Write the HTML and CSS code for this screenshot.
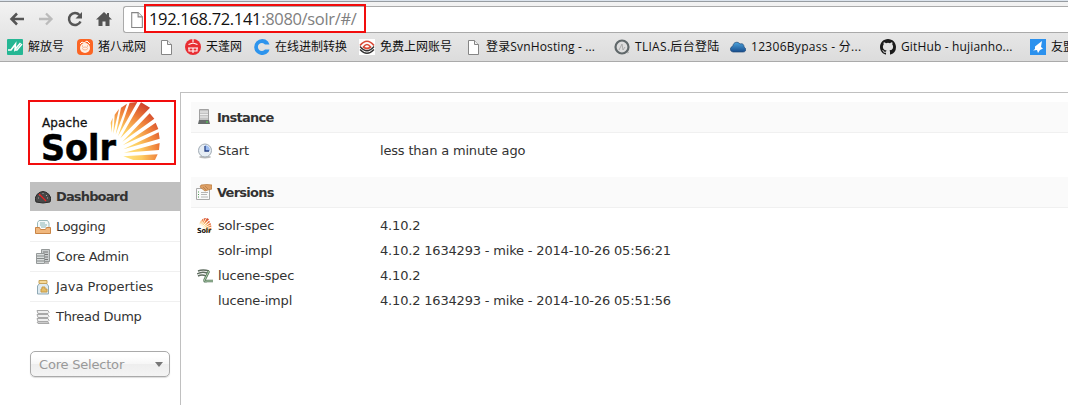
FILE: index.html
```html
<!DOCTYPE html>
<html lang="en">
<head>
<meta charset="utf-8">
<title>Solr Admin</title>
<link rel="stylesheet" href="styles.css">
</head>
<body>
<svg width="0" height="0" class="defs">
  <defs>
    <radialGradient id="sun" gradientUnits="userSpaceOnUse" cx="15" cy="172" r="205">
      <stop offset=".2" stop-color="#ffe680"/><stop offset=".45" stop-color="#fdcb60"/><stop offset=".7" stop-color="#ee7e3a"/><stop offset="1" stop-color="#c22a26"/>
    </radialGradient>
    <linearGradient id="cloud" x2="0" y2="1"><stop stop-color="#4ba3dd"/><stop offset="1" stop-color="#174c8c"/></linearGradient>
    <symbol id="page" viewBox="0 0 16 16"><path d="M3.500 1.500h6l4 4v10h-10z" fill="#fff" stroke="#858585"/><path d="M9.500 1.500v4h4" fill="#eee" stroke="#858585"/></symbol>
    <symbol id="burst" viewBox="0 6 174 177"><path fill="url(#sun)" d="M17 98L14 68L20 53ZM22 101L26 44L39 27ZM29 104L45 23L63 11ZM36 109L71 8L94 6ZM43 115L105 7L132 23ZM49 125L131 40L145 56ZM50 136L149 68L157 87ZM52 148L158 97L161 116ZM54 158L161 129L159 150ZM52 169L155 163L147 180H82Z"/></symbol>
  </defs>
</svg>

<header class="browser">
  <div class="tabs"></div>
  <div class="toolbar">
    <svg class="nav" width="16" height="16"><path d="M15 8H3M8 2.500L2.500 8L8 13.500" fill="none" stroke="#555" stroke-width="2.500"/></svg>
    <svg class="nav" width="16" height="16"><path d="M1 8H13M8 2.500L13.500 8L8 13.500" fill="none" stroke="#bbb" stroke-width="2.300"/></svg>
    <svg class="nav" width="16" height="16"><path d="M13.500 10.500A6 6 0 1 1 12.500 4" fill="none" stroke="#555" stroke-width="2.500"/><path d="M15 1v6.500H8.500z" fill="#555"/></svg>
    <svg class="nav" width="16" height="16"><path d="M8 1L0 8.500h2.500V15h4v-4.500h3V15h4V8.500H16L13 5.700V2h-2v1.800z" fill="#555"/></svg>
    <div class="omnibox">
      <svg class="doc" width="17" height="17"><use href="#page"/></svg>
      <div class="url"><b>192.168.72.141</b>:8080/solr/#/</div>
    </div>
  </div>
  <nav class="bookmarks">
    <a class="b1"><svg width="16" height="16"><rect width="16" height="16" rx="1" fill="#25b794"/><path d="M1 11H4L8.500 5L8 10.500L13.500 4" fill="none" stroke="#fff" stroke-width="1.600"/><path d="M8 11H10L15 5" fill="none" stroke="#fff" stroke-width="1.400"/></svg>解放号</a>
    <a class="b2"><svg width="16" height="16"><rect width="16" height="16" rx="4" fill="#fb6524"/><circle cx="8" cy="9" r="5" fill="#fff0e4"/><path d="M3 5L5 3L7 4L10 2L13 5" stroke="#fff" fill="none"/><ellipse cx="8" cy="9.500" rx="2.500" ry="1.500" fill="none" stroke="#fab18d"/><path d="M5 7h1M10 7h1" stroke="#e58860"/></svg>猪八戒网</a>
    <a class="b3"><svg width="16" height="16"><use href="#page"/></svg></a>
    <a class="b4"><svg width="16" height="16"><circle cx="8" cy="8" r="8" fill="#e82d32"/><path d="M8 0v3M3.500 5.500L8 4l4.500 1.500M3 9h10M4 9v3h8V9M8 9v5" fill="none" stroke="#fff" stroke-width="1.100"/></svg>天蓬网</a>
    <a class="b5"><svg width="16" height="16"><path d="M14 2.500A8 8 0 1 0 14.500 13L15.500 10.500H11A4 4 0 1 1 11 5.500H15.500Z" fill="#2d94ed"/></svg>在线进制转换</a>
    <a class="b6"><svg width="16" height="16"><rect width="16" height="16" fill="#fff"/><path d="M1 6.500Q8-2 15 6.500M4.500 8Q8 3 11.500 8Q8 11 4.500 8Z" fill="none" stroke="#d94b38" stroke-width="1.700"/><path d="M1 7.500Q8 16 15 7.500M1 10.500Q8 18 15 10.500" fill="none" stroke="#333" stroke-width="1.300"/></svg>免费上网账号</a>
    <a class="b7"><svg width="16" height="16"><use href="#page"/></svg><span>登录SvnHosting - ...</span></a>
    <a class="b8"><svg width="16" height="16"><circle cx="8" cy="8" r="6.500" fill="#ddd" stroke="#60686a" stroke-width="2.200"/><path d="M5 11L8 5L9 11L11 8M13 14L15 13" fill="none" stroke="#aaa"/></svg><span>TLIAS.后台登陆</span></a>
    <a class="b9"><svg width="16" height="16"><path d="M3 13C-1 12 0 8 3 7C3 3 8 2 10 5C13 4 14 6 14 8C17 10 16 13 13 13Z" fill="url(#cloud)" stroke="#234b78" stroke-width=".7"/></svg><span>12306Bypass - 分...</span></a>
    <a class="b10"><svg width="16" height="16"><path fill="#1b1b1b" d="M8 0C3.580 0 0 3.580 0 8c0 3.540 2.290 6.530 5.470 7.590.4.070.55-.17.55-.38v-1.490C3.800 14.200 3.330 12.780 3.330 12.780c-.36-.92-.89-1.170-.89-1.170-.73-.5.050-.49.050-.49.800.060 1.230.830 1.230.830.710 1.220 1.870.870 2.330.660.070-.52.280-.87.500-1.070C4.780 11.340 2.900 10.650 2.900 7.580c0-.87.310-1.590.820-2.150-.08-.2-.36-1.020.080-2.120 0 0 .67-.21 2.200.82a7.600 7.600 0 014 0c1.530-1.040 2.200-.82 2.200-.82.440 1.100.160 1.920.080 2.120.51.560.820 1.270.820 2.150 0 3.070-1.870 3.750-3.650 3.950.290.250.540.730.540 1.480v2.200c0 .21.150.46.550.38A8 8 0 0016 8c0-4.420-3.580-8-8-8z"/></svg><span>GitHub - hujianho...</span></a>
    <a class="b11"><svg width="16" height="16"><rect width="16" height="16" fill="#2b91ee"/><path d="M12 2L5 7.500V10L3 11.500L7 11L8 14L10 11L13 9.500L11 8Z" fill="#fff"/></svg>友盟</a>
  </nav>
</header>

<div class="app">
  <aside class="side">
    <div class="logo">
      <svg width="144" height="61" viewBox="30 102 144 61">
        <use href="#burst" x="106" y="102" width="58" height="59"/>
        <text x="42" y="127" class="apache" textLength="45.500">Apache</text>
        <text x="41" y="159.500" class="solr" textLength="75" lengthAdjust="spacingAndGlyphs">Solr</text>
      </svg>
    </div>
    <ul class="menu">
      <li class="active"><svg width="16" height="16"><path d="M1 13Q-1 9 2 5.500Q8-.5 14 5.500Q17 9 15 13Q8 15 1 13Z" fill="#484848" stroke="#2c2c2c"/><path d="M3 9h1M4.500 6l1 1M8 4v1M12 6l-1 1M12 9h1" stroke="#aaa"/><path d="M4 5L11 12" stroke="#e22" stroke-width="1.300"/></svg><span>Dashboard</span></li>
      <li><svg width="16" height="16"><path d="M2.500 8V3.500L4 1.500h8.500L14 4v5" fill="#f4fafa" stroke="#9bb9bb"/><path d="M5 4h5M5 6h7M6 8h5" stroke="#8bb4b5"/><path d="M.5 8.500h4l1 2h5l1-2h4v6H.5z" fill="#f0b77d" stroke="#c98546"/></svg><span>Logging</span></li>
      <li><svg width="16" height="16"><path d="M6.500.5h8v12h-8z" fill="#c9cdce" stroke="#959999"/><path d="M8 3h5M8 5.500h5M8 8h5M8 10.500h5" stroke="#777"/><path d="M1.500 4.500h8v10h-8z" fill="#d9dddd" stroke="#959999"/><path d="M2 7h7M2 9.500h7M2 12h7" stroke="#858989"/><path d="M10 14h4" stroke="#777"/></svg><span>Core Admin</span></li>
      <li><svg width="16" height="16"><path d="M4.500 4.500L2.500 7v8h11V7l-2-2.500z" fill="#dfebf1" stroke="#8fa9b5"/><path d="M4 1.500h8v3H4z" fill="#f5d99a" stroke="#c7a45b"/><path d="M6 13v-3h1V8h3v2h2v3z" fill="#e4bd68" stroke="#c99c46"/></svg><span class="wide">Java Properties</span></li>
      <li><svg width="16" height="16"><path d="M2 1.500h11l1 2-1 1H3zM2 5.500h11l1 2-1 1H3zM2 9.500h11l1 2-1 1H3zM2 13h11l1 1.500H3z" fill="#eee" stroke="#a8a8a8"/></svg><span>Thread Dump</span></li>
    </ul>
    <div class="selector"><span>Core Selector</span><i></i></div>
  </aside>
  <main class="content">
    <section>
      <h2><svg width="16" height="16"><path d="M3.500.5h9v12h-9z" fill="#c4c4c4" stroke="#a2a2a2"/><path d="M4 3h8M4 5.500h8M4 8h8" stroke="#eee"/><path d="M3 11h10l1 4H2z" fill="#686c6c"/><path d="M10 13h2" stroke="#4de04d"/></svg>Instance</h2>
      <dl>
        <dt><svg width="16" height="16"><ellipse cx="8" cy="14" rx="6" ry="1.500" fill="#bbb"/><circle cx="8" cy="7.500" r="6.500" fill="#e6edf4" stroke="#a2acb5"/><path d="M8 8V2A6 6 0 0113 8Z" fill="#9cbcf1"/><path d="M8 3v5h4" fill="none" stroke="#263f83" stroke-width="1.300"/></svg><span>Start</span></dt><dd>less than a minute ago</dd>
      </dl>
    </section>
    <section>
      <h2><svg width="16" height="16"><path d="M.5 4.500h13v11H.5z" fill="#fafafa" stroke="#aaa"/><path d="M2 8h1M2 10.500h1M2 13h1" stroke="#4d9951"/><path d="M5 8.500h7M5 10.500h6M5 13h7" stroke="#b6b6b6"/><path d="M5 1L11 .5L16 1V5L12 6L9 7L4 3Z" fill="#dea066" stroke="#b77839" stroke-width=".7"/><path d="M7 3l3 3M9 2l3 3" stroke="#b98453"/></svg>Versions</h2>
      <dl>
        <dt><svg width="16" height="16"><use href="#burst" x="1" y="0" width="15" height="14"/><text x="0" y="14.500" class="mini" textLength="14" lengthAdjust="spacingAndGlyphs">Solr</text></svg><span>solr-spec</span></dt><dd>4.10.2</dd>
        <dt><svg width="16" height="16"></svg><span>solr-impl</span></dt><dd>4.10.2 1634293 - mike - 2014-10-26 05:56:21</dd>
        <dt><svg width="16" height="16"><path d="M1 3Q6 1 12 3M0 6Q5 3 10 5M1 8Q5 6 9 8" fill="none" stroke="#5f6d60" stroke-width="1.400"/><path d="M12 3L8 11Q6 14 10 13L16 13" fill="none" stroke="#54745a" stroke-width="2.500"/><path d="M12 3L8 11Q6 14 10 13L16 13" fill="none" stroke="#b4d2b1"/></svg><span>lucene-spec</span></dt><dd>4.10.2</dd>
        <dt><svg width="16" height="16"></svg><span>lucene-impl</span></dt><dd>4.10.2 1634293 - mike - 2014-10-26 05:51:56</dd>
      </dl>
    </section>
  </main>
</div>
</body>
</html>
```
FILE: styles.css
```css
* { box-sizing: border-box; }
body { margin: 0; height: 405px; overflow: hidden; background: #fff; color: #333; font-family: "DejaVu Sans", Verdana, sans-serif; font-size: 13px; }
svg { display: block; flex: none; }
.defs { position: absolute; }

.browser { height: 62px; background: linear-gradient(#f3f3f3, #dcdcdc); border-bottom: 1px solid #aaa; }
.tabs { height: 2px; background: #dce4ed; border-bottom: 1px solid #979ca1; }
.toolbar { display: flex; height: 31px; padding: 4px 0 0 9px; }
.nav { margin: 5px 13px 0 0; }
.nav:nth-child(4) { margin-right: 11px; }
.omnibox { position: relative; display: flex; flex: 1; height: 27px; background: #fff; border: 1px solid #aaa; border-right: 0; border-radius: 3px 0 0 3px; }
.doc { margin: 4px 0 0 4px; }
.url { position: absolute; left: 20px; top: -3px; width: 222px; height: 29px; border: 2px solid #f20d0d; padding-left: 3px; font: 16.500px/26px "Open Sans", sans-serif; letter-spacing: -.33px; color: #808080; white-space: nowrap; }
.url b { font-weight: 400; color: #111; }
.bookmarks { display: flex; padding: 6px 0 0 7px; font: 12px/16px "Open Sans", "Noto Sans CJK SC", sans-serif; color: #111; }
.bookmarks a { display: flex; flex: none; gap: 5px; white-space: nowrap; }
.bookmarks span { letter-spacing: .15px; }
.b8 span, .b9 span { letter-spacing: .3px; }
.b1 { width: 70px; } .b2 { width: 81px; } .b3 { width: 27px; } .b4 { width: 69px; }
.b5 { width: 105px; } .b6 { width: 108px; } .b7 { width: 147px; } .b8 { width: 116px; }
.b9 { width: 150px; } .b10 { width: 150px; }
.bookmarks .b7 { margin-left: -2px; width: 149px; }

.app { display: flex; padding: 30px 0 0 28px; height: 343px; }
.side { width: 152px; padding-top: 8px; }
.logo { width: 148px; height: 65px; border: 2px solid #f20d0d; }
.apache { font: 12px "DejaVu Sans", sans-serif; fill: #111; stroke: #111; stroke-width: .3px; }
.solr { font: bold 35px "DejaVu Sans", sans-serif; fill: #000; stroke: #000; stroke-width: .5px; }
.mini { font: bold 7px "DejaVu Sans", sans-serif; fill: #111; }
.menu { list-style: none; margin: 17px 0 0 2px; padding: 0; }
.menu li { display: flex; align-items: center; gap: 5px; height: 30px; padding-left: 5px; border-bottom: 1px solid #f0f0f0; letter-spacing: -.3px; }
.menu .wide { letter-spacing: 0; }
.menu li:last-child { border-color: transparent; }
.menu .active { background: #c0c0c0; font-weight: 700; border-color: #fff; letter-spacing: -.85px; }
.selector { display: flex; justify-content: space-between; align-items: center; width: 140px; height: 26px; margin: 19px 0 0 2px; padding: 0 6px 0 8px; border: 1px solid #aaa; border-radius: 5px; background: linear-gradient(#fff 20%, #f6f6f6 50%, #eee 52%, #f4f4f4); color: #999; box-shadow: 0 1px 1px #ddd; letter-spacing: -.2px; }
.selector i { border: 4.500px solid transparent; border-top: 5px solid #777; border-bottom: 0; }

.content { flex: 1; border: solid #c0c0c0; border-width: 1px 0 0 1px; padding: 9px 0 0 10px; }
.content section { height: 75px; }
h2 { display: flex; align-items: center; gap: 5px; height: 31px; margin: 0; padding-left: 5px; background: #fafafa; border-bottom: 1px solid #f0f0f0; font-size: 13px; letter-spacing: -.75px; }
dl { display: grid; grid-template-columns: 183px 1fr; grid-auto-rows: 25px; align-items: center; margin: 0; padding: 5px 0 0 6px; letter-spacing: -.18px; }
dt { display: flex; gap: 5px; }
dd { margin: 0; white-space: nowrap; }
```
